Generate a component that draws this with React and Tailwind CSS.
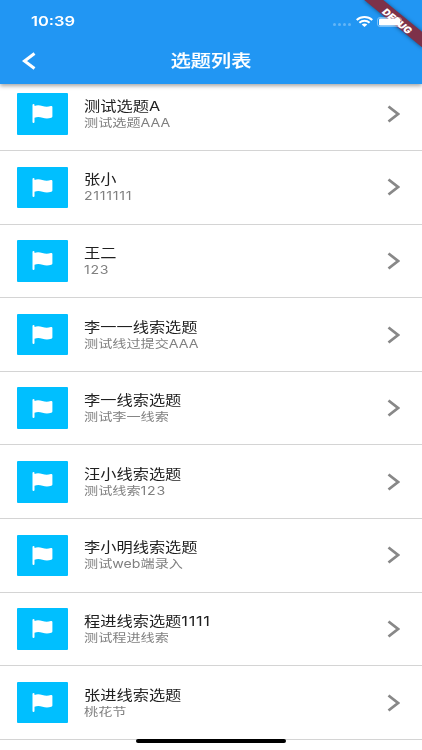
const topics = [
  { title: "测试选题A", detail: "测试选题AAA" },
  { title: "张小", detail: "2111111" },
  { title: "王二", detail: "123" },
  { title: "李一一线索选题", detail: "测试线过提交AAA" },
  { title: "李一线索选题", detail: "测试李一线索" },
  { title: "汪小线索选题", detail: "测试线索123" },
  { title: "李小明线索选题", detail: "测试web端录入" },
  { title: "程进线索选题1111", detail: "测试程进线索" },
  { title: "张进线索选题", detail: "桃花节" },
];

function FlagIcon() {
  return (
    <svg width="21" height="19" viewBox="0 0 21 19" fill="#fff">
      <path d="M0.5 1a1 1 0 0 1 2 0V1.900C5 1 7.600 1.100 10.300 2c3 1 5.600 1 8.600 0.100 0.900-0.300 1.500 0.100 1.500 0.800v9.600c0 0.700-0.400 1.100-1.100 1.300-3.100 1.100-6 1-8.800 0-2.800-0.900-5.300-1-8-0.100V18a1 1 0 0 1-2 0z" />
    </svg>
  );
}

function StatusBar() {
  return (
    <div className="relative flex h-10 items-center justify-between pl-[31px] pr-[18px] pt-[3px]">
      <span className="origin-left scale-x-[1.22] text-[13.500px] font-semibold leading-none">10:39</span>
      <div className="flex items-center">
        <div className="mr-[5px] mt-[6px] flex gap-[1.500px]">
          {[0, 1, 2, 3].map((dot) => (
            <span key={dot} className="h-[3px] w-[3.500px] rounded-full bg-white/30" />
          ))}
        </div>
        <svg width="17" height="11" viewBox="0 0 17 11" fill="none" stroke="#fff" strokeWidth="2">
          <path d="M0.700 4C5.100 0.100 11.900 0.100 16.300 4" />
          <path d="M3.400 6.800C6.300 4.200 10.700 4.200 13.600 6.800" />
          <path d="M5.700 8.500 8.500 11 11.300 8.500C9.700 7 7.300 7 5.700 8.500z" fill="#fff" stroke="none" />
        </svg>
        <svg className="ml-[4px]" width="27" height="10" viewBox="0 0 27 10">
          <rect x="0.500" y="0.500" width="24" height="9" rx="2.500" fill="none" stroke="#fff" strokeOpacity="0.4" />
          <rect x="2" y="1.500" width="21" height="7" rx="1.300" fill="#fff" />
          <path d="M25.300 3.500c1.200 0.500 1.200 2.500 0 3z" fill="#fff" fillOpacity="0.5" />
        </svg>
      </div>
    </div>
  );
}

function DebugBanner() {
  return (
    <svg className="absolute right-0 top-0" width="72" height="56" viewBox="0 0 72 56">
      <defs>
        <filter id="bannerShadow" x="-20%" y="-20%" width="140%" height="140%">
          <feGaussianBlur stdDeviation="2" />
        </filter>
      </defs>
      <path d="M13-1H31L73 33V48z" fill="#000" fillOpacity="0.5" filter="url(#bannerShadow)" />
      <path d="M13-1H32L73 32.500V48z" fill="#7d3149" />
      <text
        transform="matrix(0.795 0.653 -0.795 0.653 44.500 23.500)"
        textAnchor="middle"
        fill="#fff"
        fontSize="9.600"
        fontWeight="900"
      >
        DEBUG
      </text>
    </svg>
  );
}

// runs of digits are set slightly wider than the rest of the text
function Label({ text }) {
  return text.split(/(\d+)/).map((part, i) =>
    i % 2 ? (
      <span key={i} className="tracking-[0.600px]">
        {part}
      </span>
    ) : (
      part
    ),
  );
}

function TopicRow({ title, detail }) {
  return (
    <li className="flex h-[73.600px] items-center border-b border-[#d4d4d4] pl-[17px] pr-[22.500px]">
      <div className="flex h-[41.500px] w-[50.500px] items-center justify-center rounded-[1px] bg-[#00bfff]">
        <FlagIcon />
      </div>
      <div className="ml-[16.500px] flex-1 whitespace-nowrap pt-[1px]">
        <p className="origin-left scale-x-[1.22] text-[13.300px] leading-[18px] text-[#202020]">
          <Label text={title} />
        </p>
        <p className="origin-left scale-x-[1.22] text-[11.600px] leading-[17px] text-[#808080]">
          <Label text={detail} />
        </p>
      </div>
      <svg width="13" height="18" viewBox="0 0 13 18" fill="none" stroke="#888" strokeWidth="2.800">
        <path d="M1.500 1.500 11 9 1.500 16.500" />
      </svg>
    </li>
  );
}

export default function App() {
  return (
    <div className="relative h-[750px] w-[422px] overflow-hidden bg-white font-['Inter','Noto_Sans_CJK_SC',sans-serif]">
      <header className="relative z-10 h-[84px] bg-[#2196f3] text-white shadow-[0_2px_4px_rgba(0,0,0,0.35)]">
        <DebugBanner />
        <StatusBar />
        <div className="grid h-[41px] grid-cols-[1fr_auto_1fr] items-center px-[22px]">
          <svg width="14" height="18" viewBox="0 0 14 18" fill="none" stroke="#fff" strokeWidth="3">
            <path d="M12.500 1.500 2.500 9 12.500 16.500" />
          </svg>
          <h1 className="scale-x-[1.22] pt-px text-[16.500px] font-medium leading-none [-webkit-text-stroke:0.150px_white]">
            选题列表
          </h1>
        </div>
      </header>
      <ul className="-mt-[6.500px]">
        {topics.map((topic) => (
          <TopicRow key={topic.title} title={topic.title} detail={topic.detail} />
        ))}
      </ul>
      <div className="absolute bottom-[7px] left-[136px] h-[4px] w-[150px] rounded-full bg-black" />
    </div>
  );
}
